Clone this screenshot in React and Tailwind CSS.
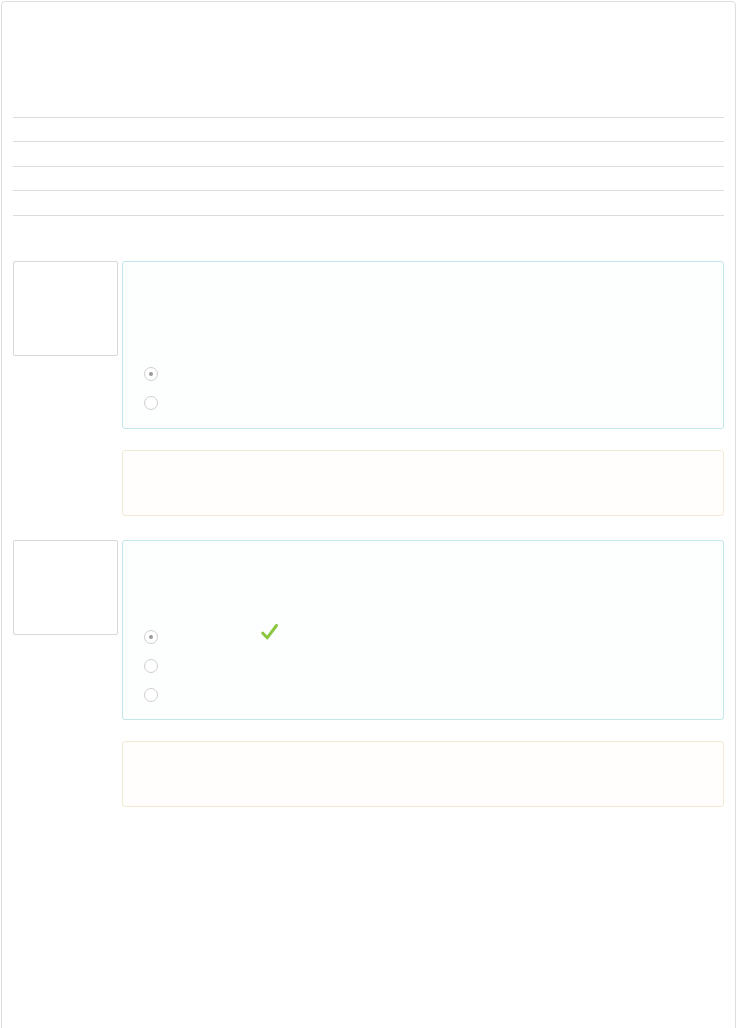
import React from "react";

function Radio({ checked }) {
  return (
    <div className="h-[29px] flex items-center pl-[21px]">
      <span className="w-[14px] h-[14px] rounded-full border border-[#cfcfcf] flex items-center justify-center bg-white">
        {checked && <span className="w-[4px] h-[4px] rounded-full bg-[#9a9a9a]" />}
      </span>
    </div>
  );
}

function Check() {
  return (
    <svg width="17" height="16" viewBox="0 0 17 16" className="ml-[103px] mt-[-9px]">
      <path d="M1.8 9.2 L6.2 13.8 L15.5 1.5" fill="none" stroke="#8cc63f" strokeWidth="3" strokeLinecap="round" strokeLinejoin="round" />
    </svg>
  );
}

function Question({ pt, options, checkFirst }) {
  return (
    <div className="flex gap-[4px]">
      <div className="w-[105px] h-[95px] border border-[#d8d8d8] rounded-[2px] shrink-0" />
      <div className="flex-1 flex flex-col">
        <div className="border border-[#c2e6ea] rounded-[3px] bg-[#fdfefe] pb-[10px]" style={{ paddingTop: pt }}>
          {Array.from({ length: options }).map((_, i) => (
            <div key={i} className="flex items-center">
              <Radio checked={i === 0} />
              {i === 0 && checkFirst && <Check />}
            </div>
          ))}
        </div>
        <div className="mt-[21px] h-[66px] border border-[#f2ead2] rounded-[3px] bg-[#fffefc]" />
      </div>
    </div>
  );
}

export default function App() {
  return (
    <div className="bg-white min-h-[1028px] pt-px pl-px" style={{ fontFamily: "'Liberation Sans', Arial, sans-serif" }}>
      <div className="w-[735px] min-h-[1100px] border border-[#dedede] rounded-[4px] px-[11px] pt-[115px]">
        <div className="border-t border-[#dcdcdc]">
          <div className="h-[24px] border-b border-[#dcdcdc]" />
          <div className="h-[25px] border-b border-[#dcdcdc]" />
          <div className="h-[24px] border-b border-[#dcdcdc]" />
          <div className="h-[25px] border-b border-[#dcdcdc]" />
        </div>
        <div className="mt-[45px] flex flex-col gap-[24px]">
          <Question pt="97.5px" options={2} />
          <Question pt="81.5px" options={3} checkFirst />
        </div>
      </div>
    </div>
  );
}
